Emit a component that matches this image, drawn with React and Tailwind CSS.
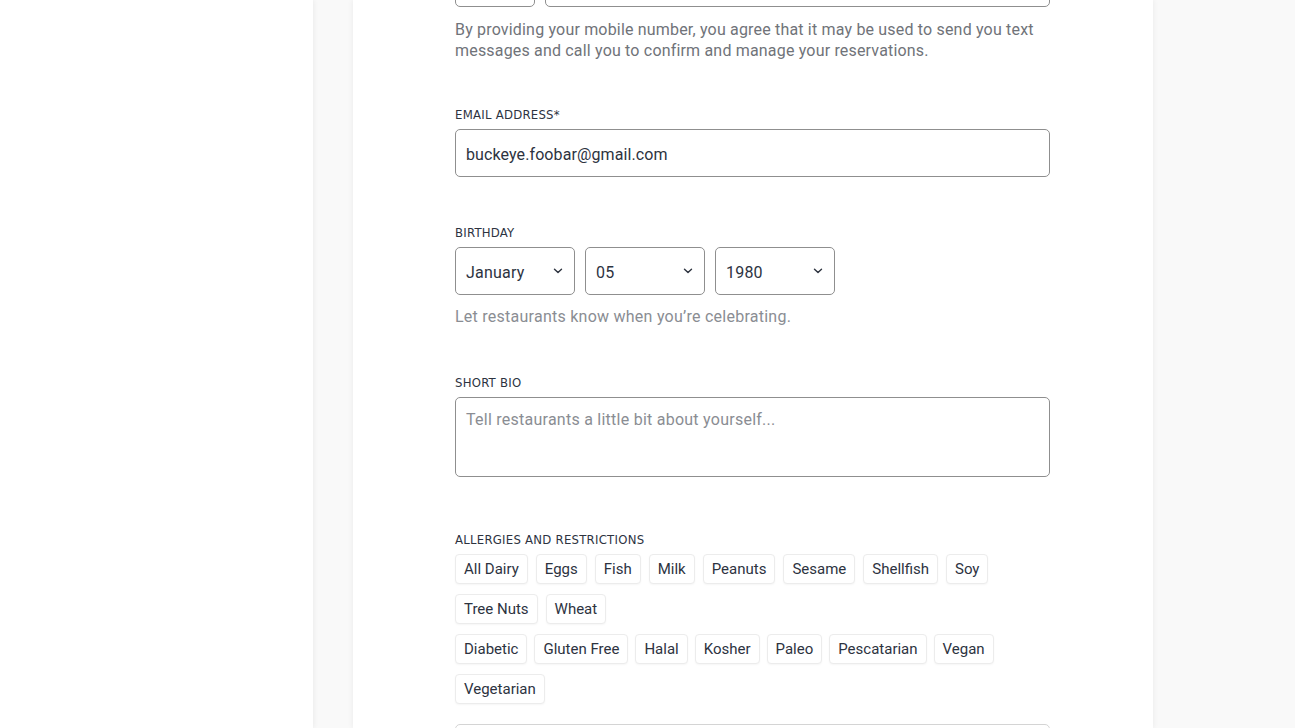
import React from 'react';

const labelFont = { fontFamily: '"DejaVu Sans Condensed", "Liberation Sans Narrow", Roboto, sans-serif' };

const allergies = ['All Dairy', 'Eggs', 'Fish', 'Milk', 'Peanuts', 'Sesame', 'Shellfish', 'Soy', 'Tree Nuts', 'Wheat'];
const diets = ['Diabetic', 'Gluten Free', 'Halal', 'Kosher', 'Paleo', 'Pescatarian', 'Vegan', 'Vegetarian'];

const Chevron = () => (
  <svg width="10" height="6" viewBox="0 0 10 6" fill="none" className="shrink-0">
    <path d="M1.5 1.2 5 4.6 8.5 1.2" stroke="#2d333f" strokeWidth="1.4" strokeLinecap="round" strokeLinejoin="round" />
  </svg>
);

const Label = ({ children }) => (
  <div
    style={labelFont}
    className="text-[13px] leading-[19px] tracking-[0.25px] uppercase text-[#2d333f]"
  >
    {children}
  </div>
);

const Select = ({ value }) => (
  <div className="w-[120px] h-12 border border-[#8f8f8f] rounded-[5px] flex items-center justify-between pl-[10px] pr-[11px]">
    <span className="pt-[4px] text-[16px] tracking-[0.2px] text-[#2d333f]">{value}</span>
    <Chevron />
  </div>
);

const Chip = ({ name }) => (
  <div className="h-[30px] px-[8px] flex items-center rounded-[4px] border border-[#ececec] shadow-[0_1px_2px_rgba(0,0,0,0.04)] text-[15px] text-[#2d333f] bg-white">
    {name}
  </div>
);

export default function App() {
  return (
    <div className="flex w-[1295px] h-[728px] overflow-hidden bg-[#f9f9f9]" style={{ fontFamily: 'Roboto, "Liberation Sans", sans-serif' }}>
      <div className="w-[313px] shrink-0 bg-white shadow-[1px_0_5px_rgba(0,0,0,0.06)]" />
      <div className="w-[40px] shrink-0" />
      <div className="w-[800px] shrink-0 bg-white shadow-[0_0_6px_rgba(0,0,0,0.07)] pl-[102px] pr-[103px]">
        {/* phone inputs, mostly scrolled away */}
        <div className="h-[7px] overflow-hidden flex items-end gap-[10px]">
          <div className="w-[80px] h-12 shrink-0 border border-[#8f8f8f] rounded-[5px]" />
          <div className="flex-1 h-12 border border-[#8f8f8f] rounded-[5px]" />
        </div>
        <p className="mt-[12px] text-[16px] leading-[21px] tracking-[0.18px] text-[#707379]">
          By providing your mobile number, you agree that it may be used to send you text messages and call you to confirm and manage your reservations.
        </p>

        <div className="mt-[44px]">
          <Label>Email Address*</Label>
          <div className="mt-[5px] h-12 border border-[#8f8f8f] rounded-[5px] flex items-center px-[10px]">
            <span className="pt-[4px] text-[16px] tracking-[0.1px] text-[#2d333f]">buckeye.foobar@gmail.com</span>
          </div>
        </div>

        <div className="mt-[46px]">
          <Label>Birthday</Label>
          <div className="mt-[5px] flex gap-[10px]">
            <Select value="January" />
            <Select value="05" />
            <Select value="1980" />
          </div>
          <p className="mt-[11px] text-[16px] leading-[21px] tracking-[0.25px] text-[#8a8d93]">Let restaurants know when you’re celebrating.</p>
        </div>

        <div className="mt-[46px]">
          <Label>Short Bio</Label>
          <div className="mt-[5px] h-20 border border-[#8f8f8f] rounded-[5px] px-[10px] pt-[10px]">
            <span className="text-[16px] tracking-[0.25px] text-[#8a8d93]">Tell restaurants a little bit about yourself...</span>
          </div>
        </div>

        <div className="mt-[53px]">
          <Label>Allergies and Restrictions</Label>
          <div className="mt-[5px] flex flex-col gap-[10px]">
            <div className="flex flex-wrap gap-x-[8px] gap-y-[10px] w-[560px]">
              {allergies.map((a) => <Chip key={a} name={a} />)}
            </div>
            <div className="flex flex-wrap gap-x-[7px] gap-y-[10px] w-[560px]">
              {diets.map((d) => <Chip key={d} name={d} />)}
            </div>
          </div>
        </div>

        <div className="mt-[20px] h-12 border border-[#d4d4d4] rounded-[5px]" />
      </div>
      <div className="flex-1" />
    </div>
  );
}
